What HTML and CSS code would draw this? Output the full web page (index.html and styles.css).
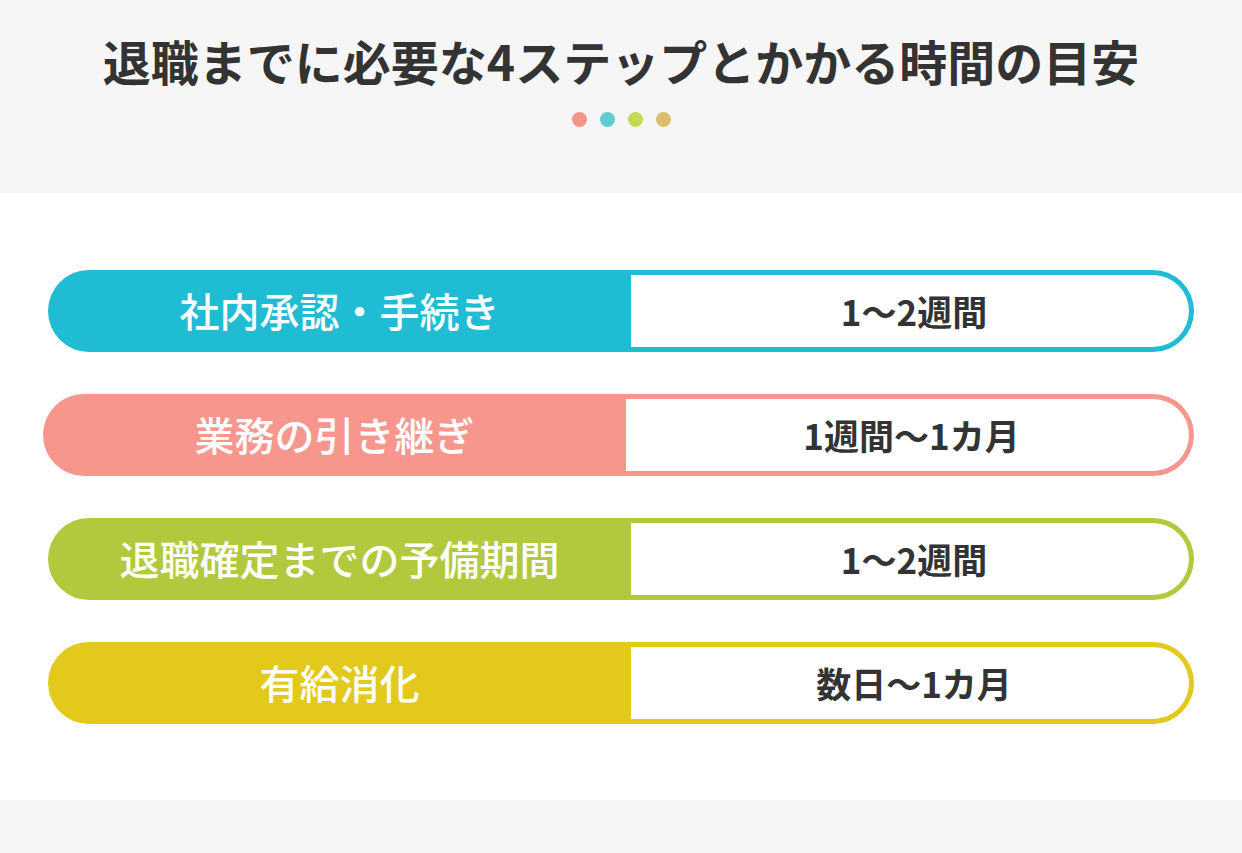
FILE: index.html
```html
<!DOCTYPE html>
<html lang="ja">
<head>
<meta charset="utf-8">
<title>退職までに必要な4ステップとかかる時間の目安</title>
<link rel="stylesheet" href="styles.css">
</head>
<body>
<header class="head">
  <h1 class="title">退職までに必要な4ステップとかかる時間の目安</h1>
  <div class="dots">
    <span class="dot dot-pink"></span>
    <span class="dot dot-cyan"></span>
    <span class="dot dot-lime"></span>
    <span class="dot dot-tan"></span>
  </div>
</header>
<main class="steps">
  <div class="row row-cyan">
    <div class="label">社内承認・手続き</div>
    <div class="time">1〜2週間</div>
  </div>
  <div class="row row-pink">
    <div class="label">業務の引き継ぎ</div>
    <div class="time">1週間〜1カ月</div>
  </div>
  <div class="row row-green">
    <div class="label">退職確定までの予備期間</div>
    <div class="time">1〜2週間</div>
  </div>
  <div class="row row-yellow">
    <div class="label">有給消化</div>
    <div class="time">数日〜1カ月</div>
  </div>
</main>
<footer class="foot"></footer>
</body>
</html>
```

FILE: styles.css
```css
* { box-sizing: border-box; }

html, body {
  margin: 0;
  padding: 0;
}

body {
  width: 1242px;
  height: 853px;
  overflow: hidden;
  background: #ffffff;
  font-family: "Noto Sans CJK JP", "Noto Sans", sans-serif;
  color: #333333;
}

.head {
  height: 193px;
  background: #f6f6f6;
  padding-top: 32px;
  display: flex;
  flex-direction: column;
  align-items: center;
}

.title {
  margin: 0;
  font-size: 48px;
  line-height: 56px;
  font-weight: 700;
  color: #333333;
  letter-spacing: 0;
}

.dots {
  margin-top: 24px;
  display: flex;
  gap: 13px;
}

.dot {
  width: 15px;
  height: 15px;
  border-radius: 50%;
}

.dot-pink { background: #f3958a; }
.dot-cyan { background: #5ecdd2; }
.dot-lime { background: #c5da52; }
.dot-tan { background: #dcbe70; }

.steps {
  padding: 77px 48px 76px;
  display: flex;
  flex-direction: column;
  gap: 42px;
  background: #ffffff;
}

.row {
  height: 82px;
  display: flex;
  padding: 5px 5px 5px 0;
  border-radius: 41px;
  background: var(--c);
}

.row-cyan { --c: #1fbcd4; }
.row-pink { --c: #f6968c; margin-left: -5px; }
.row-green { --c: #b2c83d; }
.row-yellow { --c: #e3c91b; }

.label {
  width: 583px;
  flex: none;
  color: #ffffff;
  font-size: 40px;
  font-weight: 500;
  display: flex;
  align-items: center;
  justify-content: center;
  padding-bottom: 2px;
}

.time {
  flex: 1;
  display: flex;
  align-items: center;
  justify-content: center;
  background: #ffffff;
  border-radius: 0 36px 36px 0;
  font-size: 35px;
  font-weight: 700;
  color: #333333;
  padding-left: 8px;
  padding-bottom: 2px;
}

.foot {
  height: 53px;
  background: #f6f6f6;
}
```
